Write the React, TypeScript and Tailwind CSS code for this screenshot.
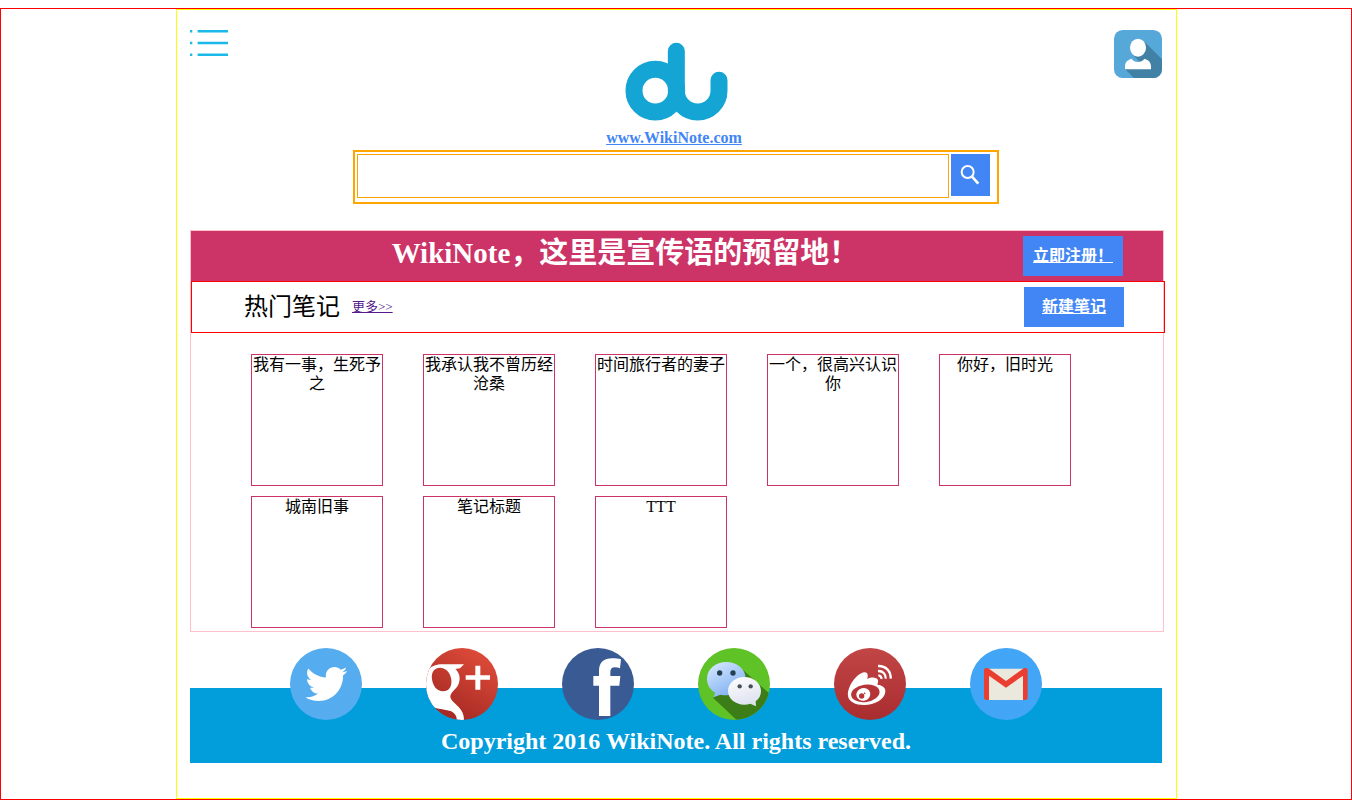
import type { ReactNode } from "react";
import { FaTwitter } from "react-icons/fa";

const notes = [
  "我有一事，生死予之",
  "我承认我不曾历经沧桑",
  "时间旅行者的妻子",
  "一个，很高兴认识你",
  "你好，旧时光",
  "城南旧事",
  "笔记标题",
  "TTT",
];

function MenuIcon() {
  return (
    <svg width="38" height="27" viewBox="0 0 38 27" fill="#1bb9ea" aria-hidden="true">
      <path d="M0 0h2.3v2.4H0zM7.6 0H38v2.5H7.6zM0 11.7h2.3v2.6H0zM7.6 11.7H38v2.6H7.6zM0 23.6h2.3V26H0zM7.6 23.5H38V26H7.6z" />
    </svg>
  );
}

function UserIcon() {
  return (
    <svg width="48" height="48" viewBox="0 0 144 144" aria-hidden="true">
      <defs>
        <clipPath id="avatar">
          <rect width="144" height="144" rx="26" />
        </clipPath>
      </defs>
      <g clipPath="url(#avatar)">
        <rect width="144" height="144" fill="#56a8d8" />
        <path d="M90 34L144 88V144H60L33 117L60 100L84 96L72 82L54 70z" fill="#4281a6" />
        <path d="M54 70L84 98L60 100L33 117V90z" fill="#56a8d8" />
        <path d="M60 78L78 96L92 88L90 70z" fill="#4281a6" />
        <ellipse cx="72" cy="53" rx="24" ry="27" fill="#fff" />
        <path d="M33 118v-9c0-13 9-20 20-23c8 13 30 13 38 0c11 3 20 10 20 23v9z" fill="#fff" />
      </g>
    </svg>
  );
}

function Logo() {
  return (
    <svg width="104" height="98" viewBox="73 0 312 294" fill="none" stroke="#14a5d4" strokeWidth="51" aria-hidden="true">
      <circle cx="167" cy="182" r="64" />
      <path d="M230 64V182A64 64 0 0 0 358 182V151" strokeLinecap="round" />
    </svg>
  );
}

function SearchIcon() {
  return (
    <svg width="39" height="42" viewBox="0 0 117 126" fill="none" stroke="#fff" aria-hidden="true">
      <circle cx="50" cy="54" r="18" strokeWidth="6" />
      <path d="M63 68L82 89" strokeWidth="8" />
    </svg>
  );
}

function Disc({ id, fill, children }: { id: string; fill: string; children?: ReactNode }) {
  return (
    <svg className="block size-[72px]" viewBox="0 0 216 216" aria-hidden="true">
      <defs>
        <clipPath id={id}>
          <circle cx="108" cy="108" r="108" />
        </clipPath>
        <linearGradient id="google-red" x1="0.8" y1="0.1" x2="0.3" y2="0.9">
          <stop offset="0" stopColor="#dc4a38" />
          <stop offset="1" stopColor="#a72a24" />
        </linearGradient>
        <linearGradient id="weibo-red" x1="0" y1="0" x2="0" y2="1">
          <stop offset="0" stopColor="#c24646" />
          <stop offset="1" stopColor="#a92c2f" />
        </linearGradient>
        <linearGradient id="bubble-blue" x1="0" y1="0" x2="0.6" y2="1">
          <stop offset="0" stopColor="#dcebff" />
          <stop offset="1" stopColor="#7fb0f3" />
        </linearGradient>
        <linearGradient id="bubble-white" x1="0" y1="0" x2="0.4" y2="1">
          <stop offset="0" stopColor="#fff" />
          <stop offset="1" stopColor="#dfe3ef" />
        </linearGradient>
      </defs>
      <g clipPath={`url(#${id})`}>
        <rect width="216" height="216" fill={fill} />
        {children}
      </g>
    </svg>
  );
}

const socials: { name: string; icon: ReactNode }[] = [
  {
    name: "Twitter",
    icon: (
      <Disc id="twitter" fill="#55acee">
        <FaTwitter x="46" y="45" size={126} color="#fff" />
      </Disc>
    ),
  },
  {
    name: "Google+",
    icon: (
      <Disc id="google" fill="url(#google-red)">
        <path
          fillRule="evenodd"
          fill="#fff"
          d="M0 70C14 56 28 49 48 49H114L102 61L88 63C101 74 104 92 98 107C92 123 73 133 73 145C73 157 86 164 98 177C109 189 114 200 114 216H92C93 203 85 194 73 188C58 181 42 184 27 179L10 176L0 120ZM42 59C24 59 15 74 18 94C21 115 33 130 51 130C69 130 78 116 76 96C74 74 60 59 42 59Z"
        />
        <path d="M0 124C20 131 34 130 52 134C41 144 41 154 50 163C62 171 72 180 78 190L30 180L0 170Z" fill="#fff" />
        <path d="M148 53h15v29h29v13h-29v30h-15V95h-29V82h29z" fill="#fff" />
      </Disc>
    ),
  },
  {
    name: "Facebook",
    icon: (
      <Disc id="facebook" fill="#3a5a94">
        <path
          fill="#fff"
          d="M111 204V113H94V84H111V68C111 43 126 31 150 31C161 31 170 32 177 34L174 61C169 59 164 58 159 58C149 58 145 63 145 72V84H175L172 113H145V204Z"
        />
      </Disc>
    ),
  },
  {
    name: "WeChat",
    icon: (
      <Disc id="wechat" fill="#5fc226">
        <path d="M135 66L216 138V216H116L45 149L100 120Z" fill="#3d7d17" />
        <path
          fill="url(#bubble-blue)"
          d="M85 42C117 42 143 64 143 92S117 142 85 142C79 142 73 141 67 140L46 148L52 134C36 125 27 110 27 92C27 64 53 42 85 42Z"
        />
        <circle cx="65" cy="75" r="8" fill="#263f50" />
        <circle cx="105" cy="75" r="8" fill="#263f50" />
        <path
          fill="url(#bubble-white)"
          d="M139 87C167 87 189 106 189 129C189 142 183 153 173 160L174 175L157 167C151 169 145 170 139 170C112 170 90 152 90 129S112 87 139 87Z"
        />
        <circle cx="125" cy="115" r="6.5" fill="#4a4f55" />
        <circle cx="158" cy="115" r="6.5" fill="#4a4f55" />
      </Disc>
    ),
  },
  {
    name: "Weibo",
    icon: (
      <Disc id="weibo" fill="url(#weibo-red)">
        <path
          fill="#fff"
          d="M42 144C39 116 68 76 91 73C101 72 103 81 100 93C113 86 130 88 132 97C133 102 131 107 130 110C146 112 155 119 154 131C152 153 123 171 90 171C64 171 44 161 42 144Z"
        />
        <ellipse cx="94" cy="136" rx="43" ry="26" transform="rotate(-8 94 136)" fill="#b63539" />
        <ellipse cx="88" cy="139" rx="21" ry="19" transform="rotate(-15 88 139)" fill="#fff" />
        <circle cx="83" cy="144" r="8" fill="#b63539" />
        <circle cx="92" cy="136" r="2.5" fill="#b63539" />
        <g fill="none" stroke="#fff" strokeWidth="7">
          <path d="M132 54C155 53 171 69 170 92" />
          <path d="M132 69C146 68 156 78 155 92" />
          <path d="M133 83C139 82 143 87 142 93" />
        </g>
      </Disc>
    ),
  },
  {
    name: "Gmail",
    icon: (
      <Disc id="gmail" fill="#42a5f5">
        <path d="M50 62H166V156H50Z" fill="#ebe9dd" />
        <path
          fill="#e93e30"
          d="M57 156H50Q42 156 42 148V67Q42 60 50 60H54L108 99L162 60H166Q173 60 173 67V148Q173 156 165 156H159V83L108 119L57 83Z"
        />
      </Disc>
    ),
  },
];

function ActionLink({ children }: { children: ReactNode }) {
  return (
    <a
      href="#"
      className="flex h-10 w-[100px] shrink-0 items-center justify-center bg-[#4285f4] text-base font-bold text-white underline"
    >
      {children}
    </a>
  );
}

export default function App() {
  return (
    <div className="mt-2 border border-[red] bg-white font-['Liberation_Serif','Noto_Sans_CJK_SC',serif] text-base text-black">
      <div className="mx-auto box-content w-[72%] border border-[yellow] px-[1%] pt-5 pb-[35px]">
        <header className="grid grid-cols-[1fr_auto_1fr] items-start">
          <button type="button" aria-label="Menu" className="justify-self-start">
            <MenuIcon />
          </button>
          <div className="flex flex-col items-center">
            <Logo />
          </div>
          <a href="#" aria-label="Account" className="justify-self-end">
            <UserIcon />
          </a>
        </header>

        <div className="pr-1 text-center leading-5">
          <a href="#" className="font-bold text-[#4285f4] underline">
            www.WikiNote.com
          </a>
        </div>

        <form className="mx-auto mt-0.5 box-content flex h-[50px] w-[66%] items-start border-2 border-[orange]">
          <div className="flex w-full gap-0.5 pt-0.5 pr-[7px] pl-0.5">
            <input
              type="text"
              aria-label="Search"
              className="h-11 min-w-0 flex-1 border border-[orange] px-2 outline-none"
            />
            <button type="submit" aria-label="Search" className="h-[42px] w-[39px] bg-[#4285f4]">
              <SearchIcon />
            </button>
          </div>
        </form>

        <main className="mt-[26px] box-content w-full border border-[pink]">
          <div className="flex h-[50px] items-center bg-[#cc3366] pr-10 pl-9">
            <h1 className="flex-1 pb-1.5 text-center text-[29px] leading-9 font-bold text-white">
              WikiNote，这里是宣传语的预留地！
            </h1>
            <ActionLink>立即注册！</ActionLink>
          </div>

          <div className="box-content flex h-[50px] w-full items-center border border-[red]">
            <div className="flex flex-1 items-center gap-3 pl-[52px]">
              <h2 className="text-2xl">热门笔记</h2>
              <a href="#" className="text-[13px] text-[#551a8b] underline">
                更多&gt;&gt;
              </a>
            </div>
            <div className="pr-10">
              <ActionLink>新建笔记</ActionLink>
            </div>
          </div>

          <ul className="flex flex-wrap gap-x-10 gap-y-2.5 pt-[21px] pb-[3px] pl-[60px]">
            {notes.map((note) => (
              <li key={note} className="size-[132px] border border-[#cc3366] text-center leading-[19px]">
                {note}
              </li>
            ))}
          </ul>
        </main>

        <footer className="mt-4">
          <nav className="relative flex justify-center gap-16 pr-5">
            {socials.map((social) => (
              <a key={social.name} href="#" aria-label={social.name}>
                {social.icon}
              </a>
            ))}
          </nav>
          <div className="-mt-8 h-[75px] bg-[#029ddb] pt-10 text-center text-2xl leading-[26px] font-bold text-white">
            Copyright 2016 WikiNote. All rights reserved.
          </div>
        </footer>
      </div>
    </div>
  );
}
